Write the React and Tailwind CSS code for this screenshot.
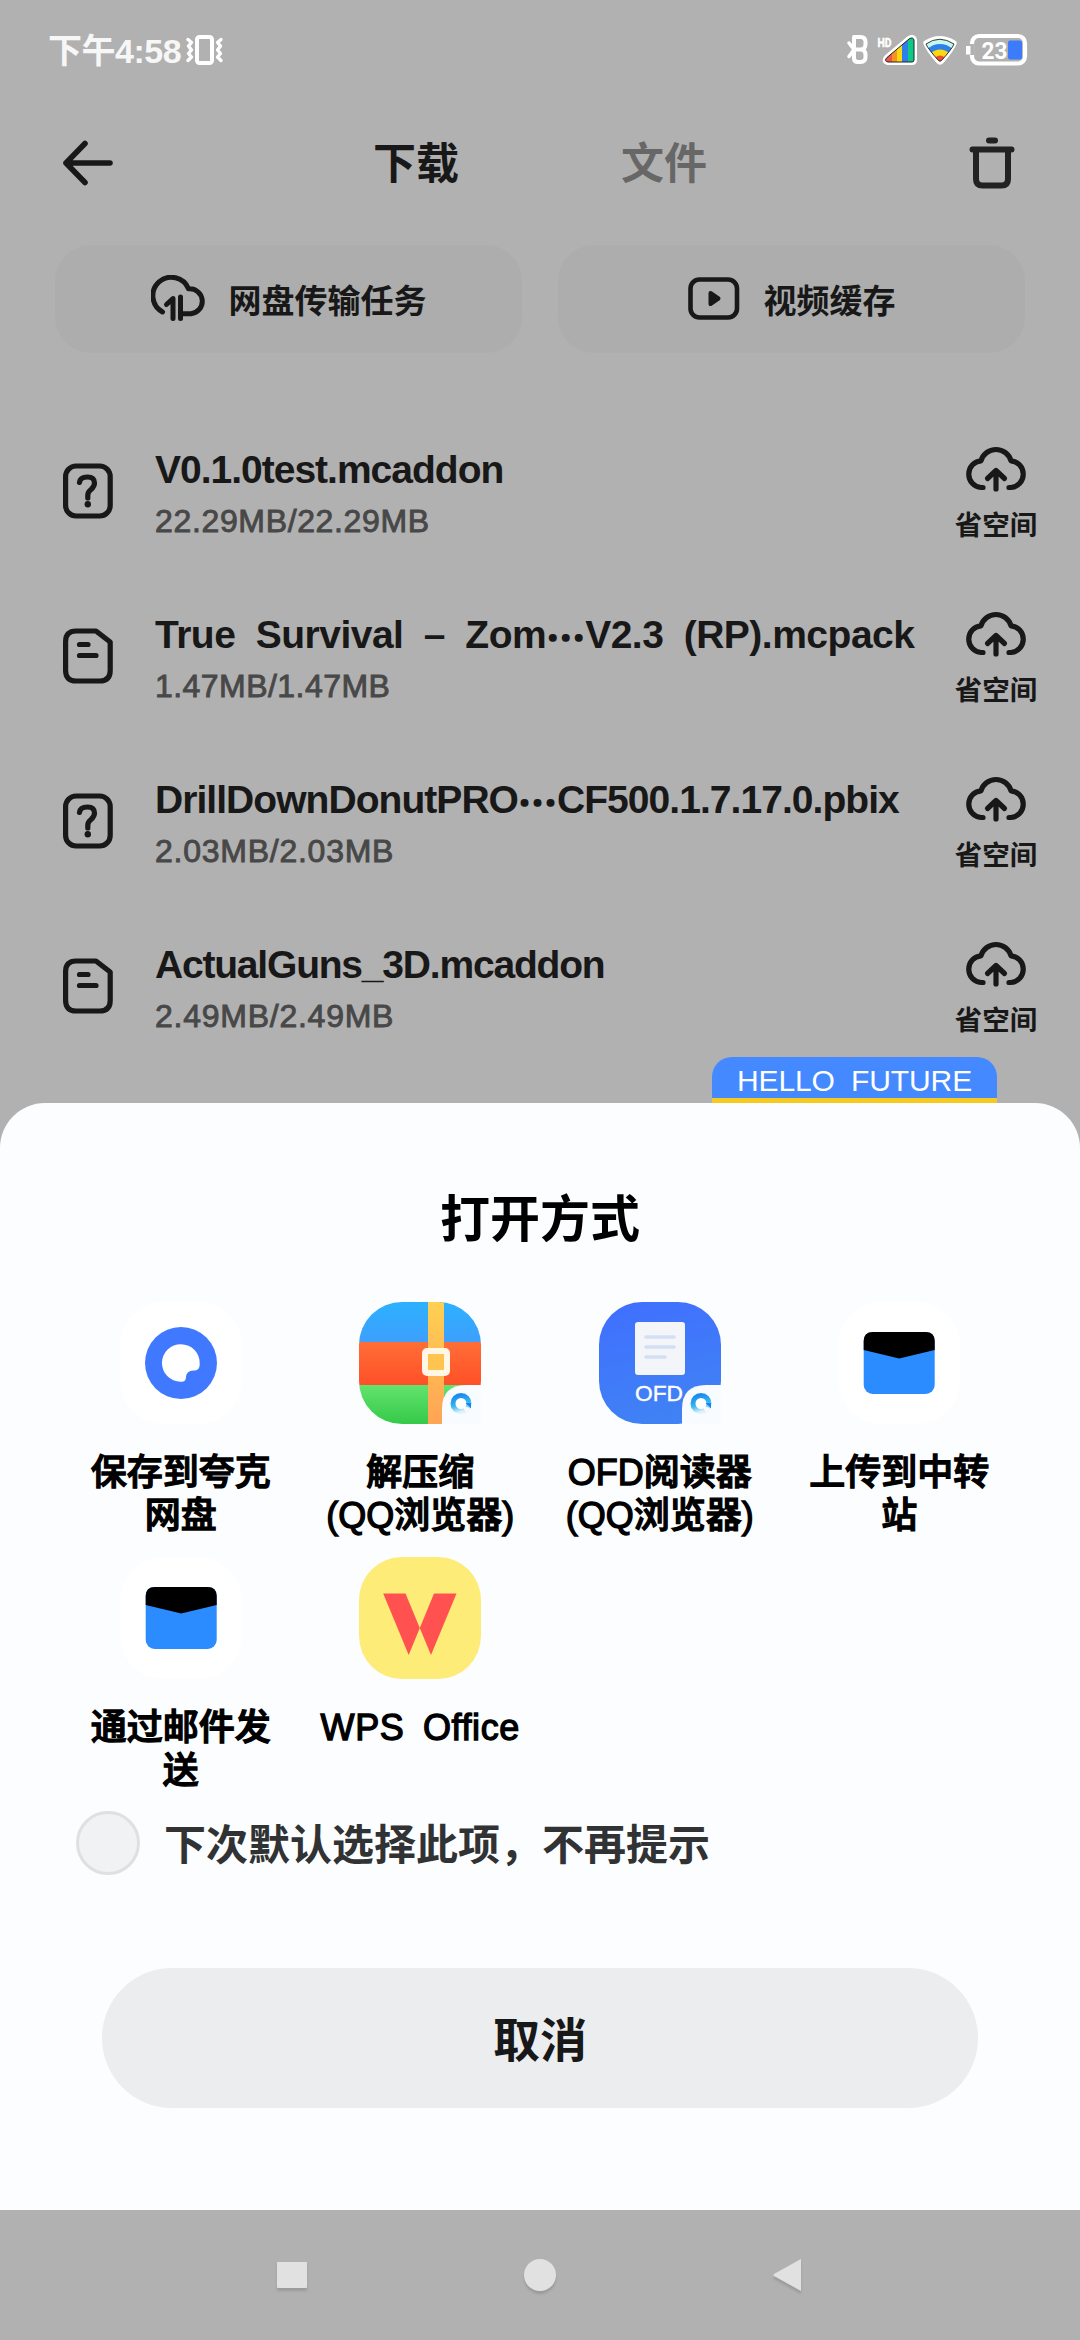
import React, { useState } from "react";

const downloads = [
  {
    type: "unknown",
    head: "V0.1.0test.mcaddon",
    size: "22.29MB/22.29MB",
    nameClass: "tracking-[-1px]",
    sizeClass: "tracking-[0.65px]",
  },
  {
    type: "doc",
    head: "True Survival – Zom",
    tail: "V2.3 (RP).mcpack",
    size: "1.47MB/1.47MB",
    nameClass: "tracking-[-0.5px] [word-spacing:10px]",
    sizeClass: "tracking-[0.45px]",
  },
  {
    type: "unknown",
    head: "DrillDownDonutPRO",
    tail: "CF500.1.7.17.0.pbix",
    size: "2.03MB/2.03MB",
    nameClass: "tracking-[-0.95px]",
    sizeClass: "tracking-[0.75px]",
  },
  {
    type: "doc",
    head: "ActualGuns_3D.mcaddon",
    size: "2.49MB/2.49MB",
    nameClass: "tracking-[-1.2px]",
    sizeClass: "tracking-[0.75px]",
  },
];

const VibrateIcon = () => (
  <svg width="38" height="30" viewBox="0 0 38 30" fill="none" stroke="#fff" strokeLinejoin="round" strokeLinecap="round">
    <rect x="11" y="2" width="15" height="26" rx="2.5" strokeWidth="4" />
    <path d="M2 4.500L5.500 7.500L2.500 11L5.500 15L2.500 18.500L5.500 22L2 25.500" strokeWidth="3.400" />
    <path d="M35 4.500L31.500 7.500L34.500 11L31.500 15L34.500 18.500L31.500 22L35 25.500" strokeWidth="3.400" />
  </svg>
);

const StatusIcons = () => (
  <svg width="184" height="34" viewBox="0 0 184 34" fill="none">
    {/* bluetooth */}
    <g stroke="#fff" strokeWidth="4" strokeLinecap="round" strokeLinejoin="round">
      <path d="M8 4h6.500q5 0 5 5v2q0 5.500-5 5.500h-5h5q5 0 5 5.500v2q0 5-5 5h-2.500q-4 0-4-4v-21z" />
      <path d="M3 10L8 16.500L3 23.500" strokeWidth="3.500" />
    </g>
    <text x="31.500" y="13.500" fill="#fff" stroke="#fff" strokeWidth="0.500" fontSize="13.500" fontWeight="700" textLength="14" lengthAdjust="spacingAndGlyphs" fontFamily="Roboto, sans-serif">HD</text>
    {/* signal */}
    <defs>
      <clipPath id="sig"><path d="M63 6Q67 3.500 68 7V27Q68 29 66 29H42Q37.500 28 41 24.500Z" /></clipPath>
      <clipPath id="wifi"><path d="M80 11Q93.500 1.500 108 11Q106 16 95.500 27.500Q94 29 92.500 27.500Q82 16 80 11Z" /></clipPath>
    </defs>
    <path d="M63 6Q67 3.500 68 7V27Q68 29 66 29H42Q37.500 28 41 24.500Z" fill="#fff" stroke="#fff" strokeWidth="6" strokeLinejoin="round" />
    <g clipPath="url(#sig)">
      <rect x="37" y="0" width="10" height="32" fill="#ee5548" />
      <rect x="46" y="0" width="6" height="32" fill="#f5951e" />
      <rect x="51" y="0" width="6" height="32" fill="#fbd80f" />
      <rect x="56" y="0" width="6" height="32" fill="#2f7fea" />
      <rect x="62" y="0" width="8" height="32" fill="#0ec986" />
    </g>
    <path d="M63 6Q67 3.500 68 7V27Q68 29 66 29H42Q37.500 28 41 24.500Z" stroke="#222" strokeWidth="1" />
    {/* wifi */}
    <path d="M80 10Q93.500 1.500 108 10Q106 16 95.500 28Q94 29.500 92.500 28Q82 16 80 10Z" fill="#fff" stroke="#fff" strokeWidth="5.500" strokeLinejoin="round" />
    <g clipPath="url(#wifi)">
      <circle cx="94" cy="29" r="26" fill="#c6f7ee" />
      <circle cx="94" cy="29" r="18" fill="#2f7fea" />
      <circle cx="94" cy="29" r="12.500" fill="#fbd80f" />
      <circle cx="94" cy="29" r="6.500" fill="#ee4a3a" />
    </g>
    <path d="M80 11Q93.500 1.500 108 11Q106 16 95.500 27.500Q94 29 92.500 27.500Q82 16 80 11Z" stroke="#222" strokeWidth="0.900" />
    {/* battery */}
    <rect x="126" y="3" width="53" height="27.500" rx="7" stroke="#fff" strokeWidth="4.200" />
    <rect x="122.500" y="11" width="5.500" height="11" fill="#b1b1b1" />
    <rect x="120" y="13" width="4.500" height="8.500" fill="#fff" />
    <rect x="162" y="7.500" width="14" height="19" rx="2" fill="#3d7bfd" />
    <text x="135.500" y="25.500" fill="#fff" fontSize="24" fontWeight="700" textLength="26" lengthAdjust="spacingAndGlyphs" fontFamily="Roboto, sans-serif">23</text>
  </svg>
);

const BackIcon = () => (
  <svg width="52" height="48" viewBox="0 0 52 48" fill="none" stroke="#181818" strokeWidth="5.600" strokeLinecap="round" strokeLinejoin="round">
    <path d="M48 24H4M23 4.500L4 24L23 43.500" />
  </svg>
);

const TrashIcon = () => (
  <svg width="46" height="52" viewBox="0 0 46 52" fill="none" stroke="#222" strokeWidth="6" strokeLinecap="round">
    <path d="M20 3.500H26M3.500 12.500H42.500" />
    <path d="M7 13V42Q7 48.500 13.500 48.500H32.500Q39 48.500 39 42V13" />
  </svg>
);

const TransferIcon = () => (
  <svg width="54" height="48" viewBox="0 0 54 48" fill="none" stroke="#181818" strokeWidth="5" strokeLinecap="round" strokeLinejoin="round">
    <path d="M11.500 37A18.500 18.500 0 1 1 37.500 13.800A12.500 12.500 0 1 1 40 38.700H29.500V22" />
    <path d="M22 43.500V23.500L15.500 29.500" />
    <path d="M29.500 38V43.500" />
  </svg>
);

const VideoIcon = () => (
  <svg width="52" height="44" viewBox="0 0 52 44" fill="none">
    <rect x="2.500" y="2.500" width="46.500" height="38" rx="9" stroke="#181818" strokeWidth="4.600" />
    <path d="M22.500 16L30.500 21.500L22.500 27Z" fill="#181818" stroke="#181818" strokeWidth="4" strokeLinejoin="round" />
  </svg>
);

const FileIcon = ({ type }) => (
  <svg width="50" height="56" viewBox="0 0 50 56" fill="none" stroke="#181818" strokeWidth="5.200" strokeLinecap="round" strokeLinejoin="round">
    {type === "unknown" ? (
      <>
        <rect x="2.600" y="3" width="44.600" height="50" rx="10.500" />
        <path d="M16.500 19.500Q17 14 24.500 14Q31.500 14 31.500 20Q31.500 23.500 28 26.500Q24.800 29 24.800 32V35" />
        <circle cx="24.800" cy="41.200" r="3.200" fill="#181818" stroke="none" />
      </>
    ) : (
      <>
        <path d="M13 3H33L47.200 14V42.500Q47.200 53 36.700 53H13Q2.600 53 2.600 42.500V13.500Q2.600 3 13 3Z" />
        <path d="M16.500 16.500H25M16.500 27.500H33" />
      </>
    )}
  </svg>
);

const CloudUpIcon = () => (
  <svg width="62" height="48" viewBox="0 0 62 48" fill="none" stroke="#181818" strokeWidth="5.200" strokeLinecap="round" strokeLinejoin="round">
    <path d="M18 43.500H16A13.400 13.400 0 0 1 16 16.800A15.600 15.600 0 0 1 46 16.800A13.400 13.400 0 0 1 46 43.500H44" />
    <path d="M31 45V27M22.500 34.500L31 26.500L39.500 34.500" />
  </svg>
);

// Small browser mark in the lower right corner of the QQ tiles
const BrowserBadge = ({ id }) => (
  <>
    <defs>
      <linearGradient id={id} x1="0.3" y1="0" x2="0.6" y2="1">
        <stop offset="0" stopColor="#1b8cf0" />
        <stop offset="0.55" stopColor="#36b6f0" />
        <stop offset="1" stopColor="#e3f3fc" />
      </linearGradient>
    </defs>
    <path d="M83 123V107Q83 83 107 83H123V123Z" fill="#f8fbff" />
    <circle cx="102" cy="101.500" r="8" fill="#fff" stroke={`url(#${id})`} strokeWidth="5" />
    <path d="M103 103L111 106.500L107 110.500Z" fill="#f8fbff" />
    <path d="M106.500 101L112 106.500V101Z" fill="#1784ea" />
  </>
);

const QuarkTile = () => (
  <svg width="122" height="122" viewBox="0 0 122 122">
    <rect width="122" height="122" rx="43" fill="#fff" />
    <circle cx="61" cy="61" r="36" fill="#4079ff" />
    <path d="M61 42.200A18.800 18.800 0 0 1 79.700 62C79.700 67 77.500 68.300 73.500 68.600C68.500 69 66.500 71 66 75C65.700 78.500 64.500 79.900 60.500 79.800A18.800 18.800 0 0 1 61 42.200Z" fill="#fff" />
  </svg>
);

const ArchiveTile = () => (
  <svg width="122" height="122" viewBox="0 0 122 122">
    <defs>
      <clipPath id="arc"><rect width="122" height="122" rx="43" /></clipPath>
      <linearGradient id="arcBlue" x2="0" y2="1"><stop stopColor="#2cb1ff" /><stop offset="1" stopColor="#3f9ffd" /></linearGradient>
      <linearGradient id="arcRed" x2="0" y2="1"><stop stopColor="#ff6e37" /><stop offset="1" stopColor="#ff5028" /></linearGradient>
      <linearGradient id="arcGreen" x2="0" y2="1"><stop stopColor="#63e36d" /><stop offset="1" stopColor="#35c949" /></linearGradient>
      <linearGradient id="arcStrap" x2="0" y2="1"><stop stopColor="#ffd052" /><stop offset="1" stopColor="#ffa355" /></linearGradient>
    </defs>
    <g clipPath="url(#arc)">
      <rect width="122" height="40" fill="url(#arcBlue)" />
      <rect y="40" width="122" height="43" fill="url(#arcRed)" />
      <rect y="83" width="122" height="39" fill="url(#arcGreen)" />
      <rect x="69" width="16" height="122" fill="url(#arcStrap)" />
    </g>
    <rect x="66" y="49" width="22" height="22" rx="2" fill="#ffc34f" stroke="#fff6e6" strokeWidth="6" />
    <BrowserBadge id="badgeArc" />
  </svg>
);

const OfdTile = () => (
  <svg width="122" height="122" viewBox="0 0 122 122">
    <defs>
      <linearGradient id="ofd" x2="0.3" y2="1"><stop stopColor="#406fff" /><stop offset="1" stopColor="#4081f5" /></linearGradient>
    </defs>
    <rect width="122" height="122" rx="43" fill="url(#ofd)" />
    <rect x="36" y="20" width="50" height="53" rx="3" fill="#f3f5f8" />
    <path d="M47 35H75M47 45H75M47 55H66" stroke="#d3dff3" strokeWidth="3.600" strokeLinecap="round" />
    <text x="36" y="98.500" fill="#fff" stroke="#fff" strokeWidth="0.400" fontSize="22" textLength="48" lengthAdjust="spacingAndGlyphs" fontFamily="Liberation Sans, sans-serif">OFD</text>
    <BrowserBadge id="badgeOfd" />
  </svg>
);

const MailTile = () => (
  <svg width="122" height="122" viewBox="0 0 122 122">
    <rect width="122" height="122" rx="43" fill="#fff" />
    <rect x="25.700" y="30" width="71" height="62" rx="9" fill="#2b8cff" />
    <path d="M25.700 48V39Q25.700 30 34.700 30H87.700Q96.700 30 96.700 39V48L61.200 56.500Z" fill="#000" />
  </svg>
);

const WpsTile = () => (
  <svg width="122" height="122" viewBox="0 0 122 122">
    <rect width="122" height="122" rx="43" fill="#feec79" />
    <path d="M24.200 36.500H46.500L60.800 71L49.700 98Z" fill="#ff5250" />
    <path d="M97.500 36.500H75L60.800 71L72 98Z" fill="#ff5250" />
  </svg>
);

const apps = [
  { label: "保存到夸克\n网盘", Tile: QuarkTile },
  { label: "解压缩\n(QQ浏览器)", Tile: ArchiveTile },
  { label: "OFD阅读器\n(QQ浏览器)", Tile: OfdTile },
  { label: "上传到中转\n站", Tile: MailTile },
  { label: "通过邮件发\n送", Tile: MailTile },
  { label: "WPS Office", Tile: WpsTile, labelClass: "tracking-[0.6px] [word-spacing:8px]" },
];

const DownloadRow = ({ item }) => (
  <div className="flex h-[165px] items-center pl-[63px] pr-[41px]">
    <FileIcon type={item.type} />
    <div className="ml-[42px] flex-1 pt-[5px] whitespace-nowrap">
      <div className={`flex h-[55px] items-center text-[39px] font-bold text-[#181818] ${item.nameClass}`}>
        <span>{item.head}</span>
        {item.tail && (
          <>
            <span className="w-[39px] text-center font-['Noto_Sans_CJK_SC',sans-serif] tracking-normal [-webkit-text-stroke:1.6px_#181818]">…</span>
            <span>{item.tail}</span>
          </>
        )}
      </div>
      <div className={`flex h-[46px] items-center text-[32px] text-[#484848] [-webkit-text-stroke:0.9px_#484848] ${item.sizeClass}`}>
        {item.size}
      </div>
    </div>
    <div className="flex w-[86px] flex-col items-center pt-[10px]">
      <CloudUpIcon />
      <span className="mt-[13px] text-[27.500px] leading-[42px] font-bold text-[#181818]">省空间</span>
    </div>
  </div>
);

const App = () => {
  const [remember, setRemember] = useState(false);

  return (
    <div className="flex h-[2340px] w-[1080px] flex-col overflow-hidden bg-[#b1b1b1] font-['Liberation_Sans','Noto_Sans_CJK_SC',sans-serif]">
      <div className="flex h-[1057px] flex-col">
        {/* Status bar */}
        <div className="flex h-[100px] items-center justify-between pl-[48px] pr-[50px]">
          <div className="flex items-center gap-[5px]">
            <span className="pt-[2px] text-[34px] leading-none font-bold tracking-[-0.5px] text-[#f7f7f7]">下午4:58</span>
            <VibrateIcon />
          </div>
          <StatusIcons />
        </div>

        {/* Top tabs */}
        <div className="flex h-[126px] items-center pl-[62px] pr-[65px]">
          <BackIcon />
          <div className="flex flex-1 items-center pt-[3px] pl-[259px] text-[43px] font-bold">
            <span className="text-[#181818]">下载</span>
            <span className="ml-[162px] text-[#676767]">文件</span>
          </div>
          <TrashIcon />
        </div>

        {/* Shortcuts */}
        <div className="mt-[19px] flex gap-[36px] px-[55px] text-[33px] font-bold text-[#181818]">
          <button className="flex h-[108px] flex-1 items-center justify-center gap-[24px] rounded-[36px] bg-[#adadad]">
            <TransferIcon />
            <span className="pt-[5px]">网盘传输任务</span>
          </button>
          <button className="flex h-[108px] flex-1 items-center justify-center gap-[24px] rounded-[36px] bg-[#adadad]">
            <VideoIcon />
            <span className="pt-[5px]">视频缓存</span>
          </button>
        </div>

        <div className="mt-[55px] h-[649px] overflow-hidden">
          {downloads.map((item) => (
            <DownloadRow key={item.head} item={item} />
          ))}
        </div>
      </div>

      <div className="mr-[83px] flex h-[46px] w-[285px] shrink-0 items-center justify-center self-end rounded-t-[20px] border-b-[5px] border-[#f5c91f] bg-[#4489ff] pt-[5px] text-[30px] tracking-[-0.1px] whitespace-nowrap text-white [word-spacing:8px]">
        HELLO FUTURE
      </div>

      {/* Open-with sheet */}
      <div className="flex h-[1107px] shrink-0 flex-col rounded-t-[45px] bg-[#fcfdff]">
        <h1 className="mt-[81px] h-[72px] text-center text-[50px] leading-[72px] font-bold text-black">打开方式</h1>
        <div className="mt-[46px] grid grid-cols-4 px-[61px]">
          {apps.map(({ label, Tile, labelClass }) => (
            <div key={label} className="flex h-[254.500px] flex-col items-center">
              <Tile />
              <span className={`mt-[27px] text-center text-[36px] leading-[43px] font-medium whitespace-pre text-black [-webkit-text-stroke:1.3px_#000] ${labelClass || ""}`}>
                {label}
              </span>
            </div>
          ))}
        </div>
        <button className="flex h-[64px] items-center pl-[76px] text-left" onClick={() => setRemember(!remember)}>
          <span className={`h-[64px] w-[64px] rounded-full border-[3px] border-[#dfe0e2] ${remember ? "bg-[#4079ff]" : "bg-[#f1f2f4]"}`} />
          <span className="ml-[24px] pt-[5px] text-[42px] font-bold text-[#303233]">下次默认选择此项，不再提示</span>
        </button>
        <button className="mx-[102px] mt-[93px] h-[140px] rounded-full bg-[#ecedef] pt-[7px] text-[47px] font-bold text-[#181818]">
          取消
        </button>
      </div>

      {/* System navigation */}
      <div className="flex h-[130px] items-center justify-center">
        <svg width="540" height="40" viewBox="0 0 540 40" fill="#e1e1e1" className="drop-shadow-[0_3px_1px_rgba(0,0,0,0.12)]">
          <rect x="7" y="7" width="30" height="26" rx="1" />
          <circle cx="270" cy="20" r="16" />
          <path d="M531 4V36L504 21Q503 20 504 19Z" />
        </svg>
      </div>
    </div>
  );
};

export default App;
